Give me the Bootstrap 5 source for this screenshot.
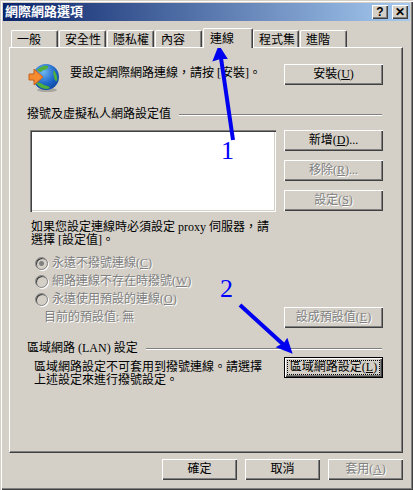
<!DOCTYPE html>
<html lang="zh-Hant">
<head>
<meta charset="utf-8">
<title>網際網路選項</title>
<link href="https://cdn.jsdelivr.net/npm/bootstrap@5.3.0/dist/css/bootstrap.min.css" rel="stylesheet">
<style>
html,body{margin:0;height:490px;overflow:hidden;background:#d4d0c8}
body{font-family:"Liberation Serif","Noto Sans CJK TC",sans-serif;font-size:12px;line-height:13px;color:#000}
.win{position:relative;width:413px;height:490px;background:#d4d0c8;padding:3px;box-shadow:inset 1px 1px 0 #d4d0c8,inset 2px 2px 0 #fff,inset -1px -1px 0 #404040,inset -2px -2px 0 #808080}
.ttl{height:18px;background:linear-gradient(90deg,#0a246a,#a6caf0);padding:0 2px}
.ttl-txt{color:#fff;font-weight:700;font-size:13px;line-height:18px}
.cap-btn{width:16px;height:14px;background:#d4d0c8;box-shadow:inset 1px 1px 0 #fff,inset -1px -1px 0 #404040,inset -2px -2px 0 #808080;font-family:"Liberation Sans",sans-serif;font-weight:700;font-size:12px;line-height:14px;text-align:center}
.tabs{height:26px;padding:4px 0 0 8px;align-items:flex-end;flex-wrap:nowrap}
.tb{height:17px;background:#d4d0c8;border-top:1px solid #fff;border-left:1px solid #fff;border-right:1px solid #404040;border-radius:2px 2px 0 0;box-shadow:inset -1px 0 0 #808080;padding:2px 0 0 5px;margin-right:1px;font-size:12px;line-height:14px;color:#000;white-space:nowrap}
.tb-on{height:20px;padding-top:3px;position:relative;z-index:2;margin:0 0 -1px 0;padding-left:6px}
.pane{height:406px;border-top:1px solid #fff;border-left:1px solid #fff;border-right:1px solid #404040;border-bottom:1px solid #404040;box-shadow:inset -1px -1px 0 #808080;margin:0 7px 0 6px;padding:16px 19px 0 17px}
.wbtn{display:block;width:99px;height:21px;padding:0;border:0;border-radius:0;background:#d4d0c8;color:#000;font-size:12px;line-height:21px;text-align:center;box-shadow:inset 1px 1px 0 #fff,inset -1px -1px 0 #404040,inset -2px -2px 0 #808080}
.wbtn:disabled{background:#d4d0c8;color:#808080;opacity:1;text-shadow:1px 1px 0 #fff}
.wbtn-foc{outline:1px solid #000;outline-offset:-1px;box-shadow:inset 2px 2px 0 #fff,inset -2px -2px 0 #404040,inset -3px -3px 0 #808080;line-height:20px}
.wbtn-foc span{border:1px dotted #000;display:block;margin:3px;line-height:13px}
.wbtn-foot{width:75px}
.globe{width:32px;height:28px;margin-right:11px}
.hd{height:14px;line-height:14px}
.hd-line{height:2px;background:#808080;border-bottom:1px solid #fff;margin:1px 1px 0 8px}
.lst{width:246px;height:82px;margin-left:3px;background:#fff;box-shadow:inset 1px 1px 0 #808080,inset 2px 2px 0 #404040,inset -1px -1px 0 #fff,inset -2px -2px 0 #d4d0c8}
.rad-row{height:14px;color:#808080;text-shadow:1px 1px 0 #fff;padding-left:8px}
.rad-row .form-check-input{appearance:none;width:13px;height:13px;margin:0 4px 0 0;border:1px solid #808080;border-radius:50%;background:#d4d0c8;box-shadow:inset 1px 1px 0 #404040,1px 1px 0 #fff;opacity:1}
.rad-row .form-check-input:checked{background:radial-gradient(circle,#808080 0 2px,#d4d0c8 3px);border-color:#808080}
.foot{height:21px;margin:6px 7px 0 0}
.ovr{position:absolute;left:0;top:0;pointer-events:none}
.numr{position:absolute;font-family:"Liberation Serif",serif;font-size:26px;line-height:26px;color:#0000ff}
.txt-blk{padding-left:4px;width:250px}
.lan-txt{padding:4px 0 0 7px;width:240px}
.cur{padding-left:17px;color:#808080;text-shadow:1px 1px 0 #fff}
</style>
</head>
<body>
<div class="win d-flex flex-column">
  <div class="ttl d-flex align-items-center justify-content-between">
    <span class="ttl-txt">網際網路選項</span>
    <div class="d-flex gap-1 pe-0">
      <div class="cap-btn">?</div>
      <div class="cap-btn">✕</div>
    </div>
  </div>
  <ul class="nav tabs">
    <li class="tb" style="width:47px">一般</li>
    <li class="tb" style="width:47px">安全性</li>
    <li class="tb" style="width:47px">隱私權</li>
    <li class="tb" style="width:47px">內容</li>
    <li class="tb tb-on" style="width:50px">連線</li>
    <li class="tb" style="width:46px">程式集</li>
    <li class="tb" style="width:47px">進階</li>
  </ul>
  <div class="pane">
    <div class="d-flex" style="height:28px">
      <svg class="globe" viewBox="0 0 32 28">
        <defs>
          <radialGradient id="g1" cx="0.4" cy="0.3" r="0.8"><stop offset="0" stop-color="#6fb8f0"/><stop offset="0.6" stop-color="#1b63c8"/><stop offset="1" stop-color="#0d3f96"/></radialGradient>
        </defs>
        <ellipse cx="20" cy="26" rx="10" ry="2" fill="#a8a59e"/>
        <circle cx="19" cy="13" r="13" fill="url(#g1)"/>
        <path d="M10 6c3-3 7-5 11-4 1 2-2 4-5 4-1 2-3 3-6 0zM27 6c2 3 4 7 3 11-2 0-3-2-3-5-1-2-1-4 0-6zM9 19c3-1 5 0 8 2 3 1 5 1 6 3-4 2-10 1-14-5z" fill="#4fae3c"/>
        <path d="M2 10h5V5l9 8-9 8v-5H2z" fill="#f58a2e" stroke="#c9621b" stroke-width="1"/>
      </svg>
      <div class="flex-grow-1" style="padding-top:3px">要設定網際網路連線，請按 [安裝]。</div>
      <button class="btn wbtn" type="button">安裝(<u>U</u>)</button>
    </div>
    <div class="d-flex align-items-center hd" style="margin-top:15px">
      <span>撥號及虛擬私人網路設定值</span><div class="hd-line flex-grow-1"></div>
    </div>
    <div class="d-flex justify-content-between" style="margin-top:9px">
      <div class="lst"></div>
      <div class="d-flex flex-column" style="gap:9px">
        <button class="btn wbtn" type="button">新增(<u>D</u>)...</button>
        <button class="btn wbtn" type="button" disabled>移除(<u>R</u>)...</button>
        <button class="btn wbtn" type="button" disabled>設定(<u>S</u>)</button>
      </div>
    </div>
    <div class="txt-blk" style="margin-top:9px">如果您設定連線時必須設定 proxy 伺服器，請選擇 [設定值]。</div>
    <div class="d-flex flex-column" style="gap:4px;margin-top:9px">
      <div class="rad-row d-flex align-items-center"><input class="form-check-input" type="radio" checked disabled>永遠不撥號連線(<u>C</u>)</div>
      <div class="rad-row d-flex align-items-center"><input class="form-check-input" type="radio" disabled>網路連線不存在時撥號(<u>W</u>)</div>
      <div class="rad-row d-flex align-items-center"><input class="form-check-input" type="radio" disabled>永遠使用預設的連線(<u>O</u>)</div>
    </div>
    <div class="d-flex justify-content-between align-items-center" style="margin-top:1px">
      <span class="cur">目前的預設值: 無</span>
      <button class="btn wbtn" type="button" disabled>設成預設值(<u>E</u>)</button>
    </div>
    <div class="d-flex align-items-center hd" style="margin-top:13px">
      <span>區域網路 (LAN) 設定</span><div class="hd-line flex-grow-1"></div>
    </div>
    <div class="d-flex justify-content-between" style="margin-top:2px">
      <div class="lan-txt">區域網路設定不可套用到撥號連線。請選擇上述設定來進行撥號設定。</div>
      <button class="btn wbtn wbtn-foc" type="button"><span>區域網路設定(<u>L</u>)</span></button>
    </div>
  </div>
  <div class="foot d-flex justify-content-end gap-2">
    <button class="btn wbtn wbtn-foot" type="button">確定</button>
    <button class="btn wbtn wbtn-foot" type="button">取消</button>
    <button class="btn wbtn wbtn-foot" type="button" disabled>套用(<u>A</u>)</button>
  </div>
  <svg class="ovr" width="413" height="490" viewBox="0 0 413 490">
    <path d="M233 140L221 58" stroke="#0000f0" stroke-width="4" fill="none"/>
    <path d="M219 47L214 60L220 58L226 58Z" stroke="#0000f0" stroke-width="2" fill="#0000f0"/>
    <path d="M240 305L285 346" stroke="#0000f0" stroke-width="4" fill="none"/>
    <path d="M291 352L278 347L285 343L287 340Z" stroke="#0000f0" stroke-width="2" fill="#0000f0"/>
  </svg>
  <span class="numr" style="left:221px;top:138px">1</span>
  <span class="numr" style="left:220px;top:276px">2</span>
</div>
</body>
</html>
